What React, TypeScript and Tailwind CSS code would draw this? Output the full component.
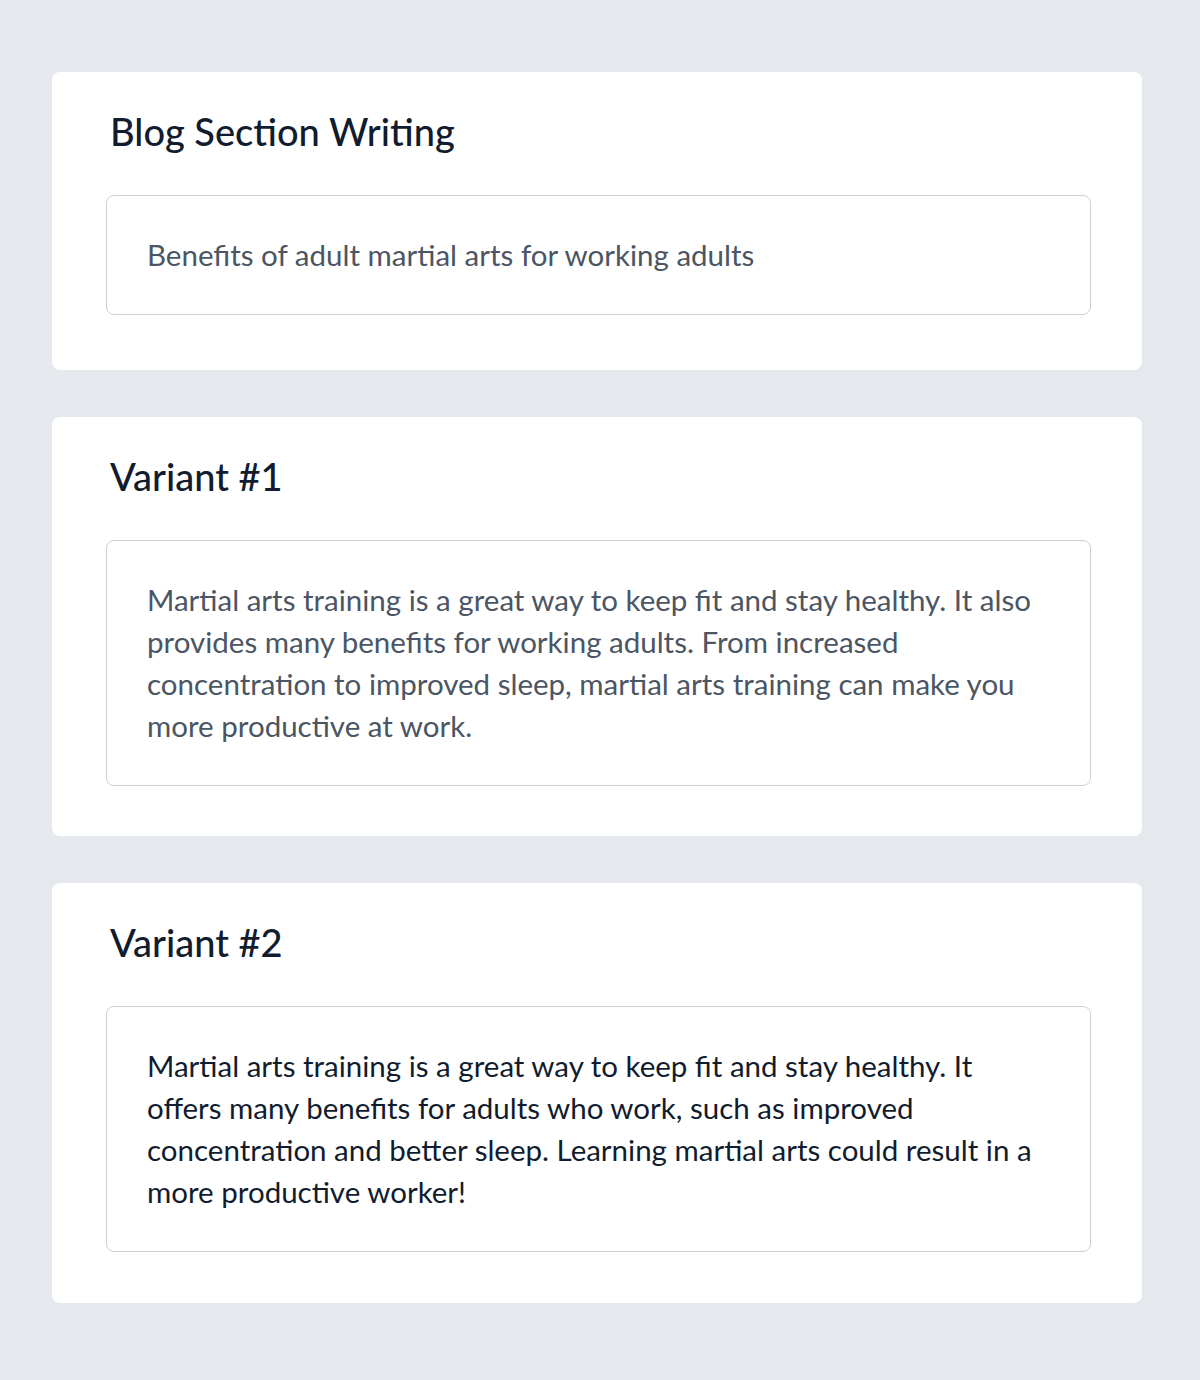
const cards = [
  {
    title: 'Blog Section Writing',
    body: 'Benefits of adult martial arts for working adults',
    tone: 'text-[#4b5563]',
    pb: 'pb-[55px]',
  },
  {
    title: 'Variant #1',
    body: 'Martial arts training is a great way to keep fit and stay healthy. It also provides many benefits for working adults. From increased concentration to improved sleep, martial arts training can make you more productive at work.',
    tone: 'text-[#4b5563]',
    pb: 'pb-[50px]',
  },
  {
    title: 'Variant #2',
    body: 'Martial arts training is a great way to keep fit and stay healthy. It offers many benefits for adults who work, such as improved concentration and better sleep. Learning martial arts could result in a more productive worker!',
    tone: 'text-[#111c2e]',
    pb: 'pb-[51px]',
  },
];

export default function App() {
  return (
    <div
      className="min-h-[1380px] bg-[#e5e8ed] pl-[52px] pr-[58px] pt-[72px] pb-[76px] flex flex-col gap-[47px]"
      style={{ fontFamily: 'Lato, "Open Sans", sans-serif' }}
    >
      {cards.map((c) => (
        <section key={c.title} className={`bg-white rounded-lg pt-[37px] pl-[54px] pr-[51px] ${c.pb}`}>
          <h2 className="text-[38px] leading-[44px] font-medium text-[#111c2e] mb-[42px] pl-[4px]">{c.title}</h2>
          <div
            className={`border-[1.5px] border-[#cbd0db] rounded-lg pl-[40px] pr-[39px] py-[38px] text-[29.5px] leading-[42px] ${c.tone}`}
          >
            {c.body}
          </div>
        </section>
      ))}
    </div>
  );
}
